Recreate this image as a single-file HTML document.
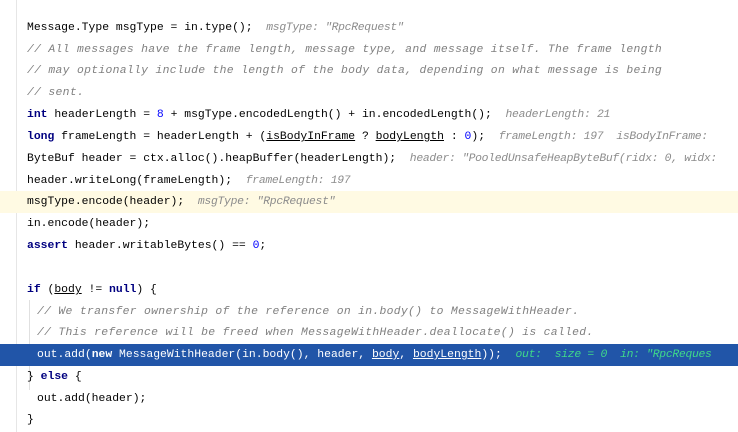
<!DOCTYPE html>
<html><head><meta charset="utf-8"><style>
html,body{margin:0;padding:0;background:#fff;width:738px;height:432px;overflow:hidden}
body{position:relative;font-family:"Liberation Mono",monospace;font-size:11.4px;color:#000}
.g{position:absolute;left:16px;top:0;bottom:0;width:1px;background:#e6e6e6}
.l{position:absolute;left:0;right:0;height:22px;line-height:22px;white-space:pre;padding-left:27px}
.i{padding-left:37px}
.c{color:#808080;font-style:italic;letter-spacing:0.3px}
.h{color:#8c8c8c;font-style:italic;letter-spacing:-0.3px}
.k{color:#000080;font-weight:bold}
.n{color:#0000ff}
.u{text-decoration:underline}
.y{background:#fffae3}
.s{background:#2155a8;color:#fff}
.s .k{color:#fff}
.s .h{color:#3fd98a}
.ig{position:absolute;left:29px;top:300px;height:90px;width:1px;background:#e0e0e0}
</style></head><body>
<div class="g"></div>
<div class="ig"></div>
<div class="l" style="top:17px">Message.Type msgType = in.type();  <span class="h">msgType: "RpcRequest"</span></div>
<div class="l c" style="top:39px">// All messages have the frame length, message type, and message itself. The frame length</div>
<div class="l c" style="top:60px">// may optionally include the length of the body data, depending on what message is being</div>
<div class="l c" style="top:82px">// sent.</div>
<div class="l" style="top:104px"><span class="k">int</span> headerLength = <span class="n">8</span> + msgType.encodedLength() + in.encodedLength();  <span class="h">headerLength: 21</span></div>
<div class="l" style="top:126px"><span class="k">long</span> frameLength = headerLength + (<span class="u">isBodyInFrame</span> ? <span class="u">bodyLength</span> : <span class="n">0</span>);  <span class="h">frameLength: 197  isBodyInFrame:</span></div>
<div class="l" style="top:148px">ByteBuf header = ctx.alloc().heapBuffer(headerLength);  <span class="h">header: "PooledUnsafeHeapByteBuf(ridx: 0, widx:</span></div>
<div class="l" style="top:170px">header.writeLong(frameLength);  <span class="h">frameLength: 197</span></div>
<div class="l y" style="top:191px">msgType.encode(header);  <span class="h">msgType: "RpcRequest"</span></div>
<div class="l" style="top:213px">in.encode(header);</div>
<div class="l" style="top:235px"><span class="k">assert</span> header.writableBytes() == <span class="n">0</span>;</div>
<div class="l" style="top:279px"><span class="k">if</span> (<span class="u">body</span> != <span class="k">null</span>) {</div>
<div class="l i c" style="top:301px">// We transfer ownership of the reference on in.body() to MessageWithHeader.</div>
<div class="l i c" style="top:322px">// This reference will be freed when MessageWithHeader.deallocate() is called.</div>
<div class="l i s" style="top:344px">out.add(<span class="k">new</span> MessageWithHeader(in.body(), header, <span class="u">body</span>, <span class="u">bodyLength</span>));  <span class="h">out:  size = 0  in: "RpcReques</span></div>
<div class="l" style="top:366px">} <span class="k">else</span> {</div>
<div class="l i" style="top:388px">out.add(header);</div>
<div class="l" style="top:409px">}</div>
</body></html>
